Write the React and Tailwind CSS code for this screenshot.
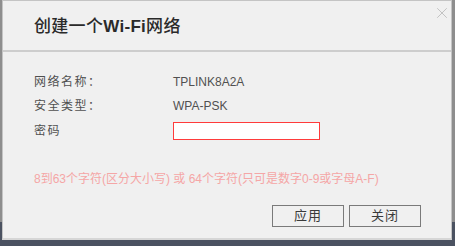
import { X } from 'lucide-react'

// 创建 Wi-Fi 网络 对话框
const rows = [
  { label: '网络名称：', value: 'TPLINK8A2A' },
  { label: '安全类型：', value: 'WPA-PSK' },
]

export default function App() {
  return (
    <div
      className="w-[455px] h-[246px] overflow-hidden pl-[2px] pr-[3px]
        bg-[linear-gradient(to_bottom,#8e8e8e_222px,#4b5261_222px)]
        font-['Liberation_Sans','Noto_Sans_CJK_SC',sans-serif]"
    >
      <div className="h-[240px] bg-[#f0f0f0] border border-[#c4c4c4] border-b-2 border-b-[#d6d6d6] flex flex-col">
        {/* 标题栏 */}
        <div className="h-[51px] shrink-0 flex items-center pl-[31px] pr-[6px] pt-[3px] border-b-2 border-[#cdcdcd] relative">
          <h1 className="text-[17px] font-medium text-[#2a2a2a] tracking-[0.3px]">
            创建一个<span className="font-bold">Wi-Fi</span>网络
          </h1>
          <X
            size={18}
            strokeWidth={1.1}
            className="absolute right-[0px] top-[3px] text-[#b8b8b8]"
          />
        </div>

        {/* 内容 */}
        <div className="pl-[31px] pt-[20px] text-[12px] text-[#505050]">
          {rows.map((r, i) => (
            <div key={r.label} className={`h-[20px] flex items-center ${i > 0 ? 'mt-[4px]' : ''}`}>
              <span className="w-[139px] tracking-[1.5px]">{r.label}</span>
              <span>{r.value}</span>
            </div>
          ))}
          <div className="h-[20px] mt-[5px] flex items-center">
            <span className="w-[139px] tracking-[1.5px]">密码</span>
            <input
              type="password"
              className="w-[147px] h-[18px] bg-white border border-[#ff3b3b] outline-none"
            />
          </div>

          <p className="mt-[30px] h-[16px] leading-[16px] text-[12px] text-[#f5a6a6] whitespace-nowrap">
            8到63个字符(区分大小写) 或 64个字符(只可是数字0-9或字母A-F)
          </p>
        </div>

        {/* 按钮 */}
        <div className="mt-[18px] flex justify-end gap-[5px] pr-[30px]">
          {['应用', '关闭'].map((t) => (
            <button
              key={t}
              className="w-[72px] h-[22px] border border-[#7a7a7a] bg-[#f0f0f0] text-[13px] text-[#3a3a3a] tracking-[1px]"
            >
              {t}
            </button>
          ))}
        </div>
      </div>
    </div>
  )
}
